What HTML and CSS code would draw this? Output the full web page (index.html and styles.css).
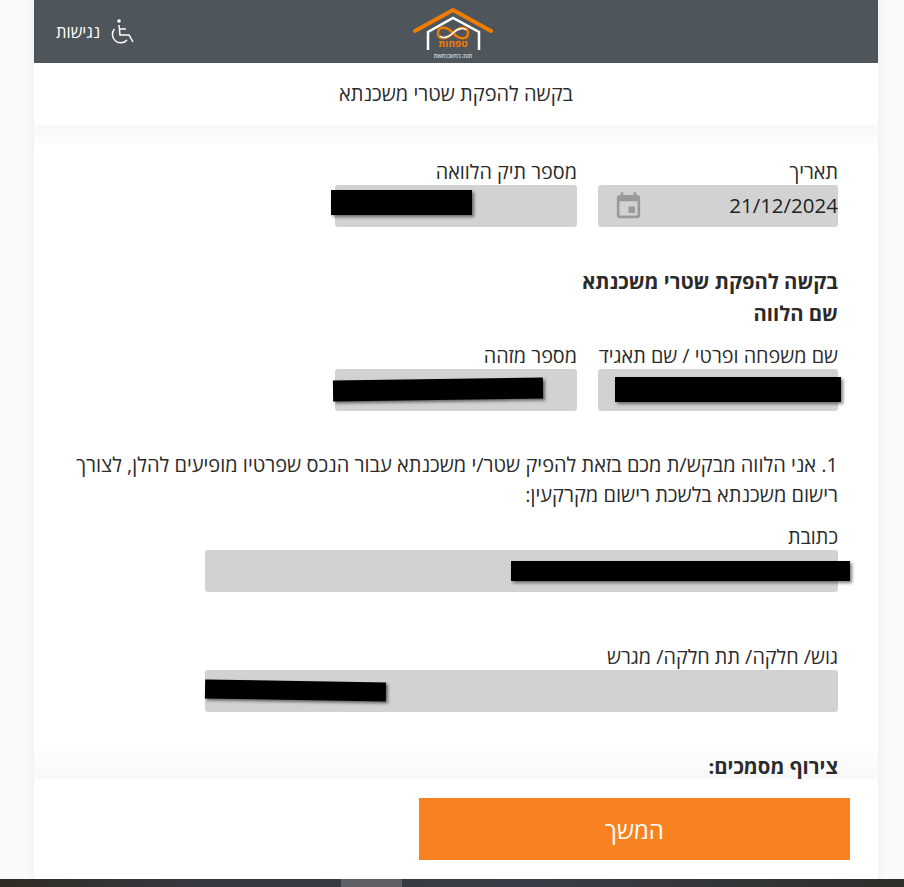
FILE: index.html

```html
<!DOCTYPE html>
<html lang="he" dir="rtl">
<head>
  <meta charset="UTF-8" />
  <meta name="viewport" content="width=device-width, initial-scale=1.0"/>
  <title>בקשה להפקת שטרי משכנתא</title>
  <link rel="stylesheet" href="styles.css">
</head>
<body>
  <div class="card">
    <header class="topbar">
      <svg class="logo" viewBox="0 0 80 60" width="80" height="60" aria-hidden="true">
        <path class="logo-roof" d="M2 29 L40 8 L78 29"/>
        <path class="logo-house" d="M15 48 V30 L40 16 L66 30 V48"/>
        <path class="logo-loop" d="M40 31 C34 24 25 24 25 31 C25 38 34 38 40 31 C46 24 55 24 55 31 C55 38 46 38 40 31"/>
        <path class="logo-loop-inner" d="M27 34 C30 37 36 35 40 31 C44 27 50 25 53 28"/>
        <text class="logo-name" x="40" y="45" text-anchor="middle">טפחות</text>
        <text class="logo-sub" x="40" y="55.5" text-anchor="middle">מטה במשכנתאות</text>
      </svg>
      <a class="access">
        <svg viewBox="0 0 28 28" width="28" height="28" aria-hidden="true">
          <circle cx="10" cy="4" r="1.8" fill="#fff"/>
          <path class="access-line" d="M10 8 L11 18 H20 L24 25"/>
          <path class="access-line" d="M10.5 12 H17"/>
          <path class="access-line" d="M5.5 12 A8.2 8.2 0 1 0 18 23"/>
        </svg>
        <span>נגישות</span>
      </a>
    </header>

    <div class="page-title">בקשה להפקת שטרי משכנתא</div>

    <main class="content">
      <div class="row">
        <div class="field">
          <label>תאריך</label>
          <div class="input input-date">
            <span>21/12/2024</span>
            <svg viewBox="0 0 24 24" width="31" height="31" aria-hidden="true">
              <path fill="#999" d="M17 12h-5v5h5v-5zM16 1v2H8V1H6v2H5c-1.11 0-1.99.9-1.99 2L3 19c0 1.1.89 2 2 2h14c1.1 0 2-.9 2-2V5c0-1.1-.9-2-2-2h-1V1h-2zm3 18H5V8h14v11z"/>
            </svg>
          </div>
        </div>
        <div class="field field-second">
          <label>מספר תיק הלוואה</label>
          <div class="input"><i class="mask mask-file"></i></div>
        </div>
      </div>

      <h2 class="heading heading-request">בקשה להפקת שטרי משכנתא</h2>
      <h2 class="heading">שם הלווה</h2>

      <div class="row row-borrower">
        <div class="field">
          <label>שם משפחה ופרטי / שם תאגיד</label>
          <div class="input"><i class="mask mask-name"></i></div>
        </div>
        <div class="field field-second">
          <label>מספר מזהה</label>
          <div class="input"><i class="mask mask-id"></i></div>
        </div>
      </div>

      <p class="statement">1. אני הלווה מבקש/ת מכם בזאת להפיק שטר/י משכנתא עבור הנכס שפרטיו מופיעים להלן, לצורך רישום משכנתא בלשכת רישום מקרקעין:</p>

      <div class="field field-wide">
        <label>כתובת</label>
        <div class="input"><i class="mask mask-address"></i></div>
      </div>

      <div class="field field-wide field-parcel">
        <label>גוש/ חלקה/ תת חלקה/ מגרש</label>
        <div class="input"><i class="mask mask-parcel"></i></div>
      </div>

      <h2 class="heading heading-docs">צירוף מסמכים:</h2>
    </main>

    <footer class="actions">
      <button class="next">המשך</button>
    </footer>
  </div>
  <div class="taskbar"><span class="taskbar-thumb"></span></div>
</body>
</html>
```

FILE: styles.css

```css
* {
  box-sizing: border-box;
}
html, body {
  margin: 0;
  height: 887px;
  overflow: hidden;
}
body {
  font-family: 'Open Sans', 'Noto Sans', 'DejaVu Sans', sans-serif;
  background-color: #fafafa;
  color: #2b2b2b;
  font-size: 18px;
}
.card {
  width: 844px;
  height: 879px;
  margin-right: 26px;
  background: #fff;
  box-shadow: 0 0 12px rgba(0, 0, 0, 0.06);
  display: flex;
  flex-direction: column;
}
.topbar {
  height: 63px;
  flex: none;
  background: #4e555b;
  display: flex;
  align-items: center;
  justify-content: center;
  position: relative;
}
.logo {
  margin: 1px 6px 0 0;
}
.logo-roof {
  fill: none;
  stroke: #f07d00;
  stroke-width: 4;
  stroke-linecap: round;
  stroke-linejoin: round;
}
.logo-house {
  fill: none;
  stroke: #fff;
  stroke-width: 2.5;
}
.logo-loop {
  fill: none;
  stroke: #f07d00;
  stroke-width: 2.5;
}
.logo-loop-inner {
  fill: none;
  stroke: #fff;
  stroke-width: 1.6;
}
.logo-name {
  fill: #f07d00;
  font-size: 10px;
  font-weight: 700;
}
.logo-sub {
  fill: #fff;
  font-size: 5.5px;
}
.access {
  position: absolute;
  left: 22px;
  top: 17px;
  display: flex;
  direction: ltr;
  align-items: center;
  gap: 9px;
  flex-direction: row-reverse;
  color: #fff;
  font-size: 16.5px;
}
.access-line {
  fill: none;
  stroke: #fff;
  stroke-width: 1.5;
}
.page-title {
  height: 62px;
  flex: none;
  display: flex;
  align-items: center;
  justify-content: center;
  padding-bottom: 2px;
  font-size: 20px;
  background: #fff;
}
.content {
  flex: 1;
  min-height: 0;
  overflow: hidden;
  padding: 30px 40px 0 41px;
  background:
    linear-gradient(#f8f8f8, #fff) top / 100% 22px no-repeat,
    linear-gradient(#fff, #f8f8f8) bottom / 100% 34px no-repeat,
    #fff;
}
.row {
  display: flex;
  gap: 21px;
}
.field {
  width: 240px;
}
.field-second {
  width: 242px;
}
.field-wide {
  width: 633px;
  margin-top: 10px;
}
label {
  display: block;
  height: 30px;
  line-height: 34px;
  font-size: 19.8px;
}
.input {
  height: 42px;
  background: #d2d2d2;
  border-radius: 3px;
  position: relative;
  display: flex;
  align-items: center;
  justify-content: space-between;
  font-size: 20.5px;
  color: #222;
}
.input-date {
  padding-left: 15px;
}
.input-date span {
  margin-bottom: 3px;
}
.mask {
  position: absolute;
  background: #000;
  box-shadow: 2px 2px 3px rgba(0, 0, 0, 0.5);
}
.mask-file {
  left: -4px;
  top: 5px;
  width: 141px;
  height: 25px;
}
.mask-name {
  right: -3px;
  top: 8px;
  width: 226px;
  height: 25px;
}
.mask-id {
  left: -2px;
  top: 10px;
  width: 210px;
  height: 21px;
  transform: rotate(-0.8deg);
}
.mask-address {
  right: -12px;
  top: 11px;
  width: 339px;
  height: 20px;
}
.mask-parcel {
  left: 0;
  top: 11px;
  width: 181px;
  height: 19px;
  transform: rotate(1deg);
}
.heading {
  margin: 0;
  height: 32px;
  line-height: 32px;
  font-size: 20.3px;
  font-weight: 700;
}
.heading-request {
  margin-top: 38px;
}
.row-borrower {
  margin-top: 10px;
}
.statement {
  margin: 39px 0 0;
  line-height: 30px;
  font-size: 20px;
}
.field-parcel {
  margin-top: 48px;
}
.heading-docs {
  margin-top: 42px;
  height: 24px;
  line-height: 24px;
}
.actions {
  height: 100px;
  flex: none;
  background: #fff;
  padding: 19px 28px 0 0;
}
.next {
  display: block;
  width: 431px;
  height: 62px;
  border: 0;
  background: #f7821f;
  color: #fff;
  font-family: inherit;
  font-size: 24px;
  cursor: pointer;
}
.taskbar {
  height: 8px;
  background: linear-gradient(to right, #2f2c22, #36383f 20%, #3a3c47 60%, #2c3029);
  position: relative;
}
.taskbar-thumb {
  position: absolute;
  left: 341px;
  top: 0;
  width: 61px;
  height: 8px;
  background: #5f6066;
}
```
